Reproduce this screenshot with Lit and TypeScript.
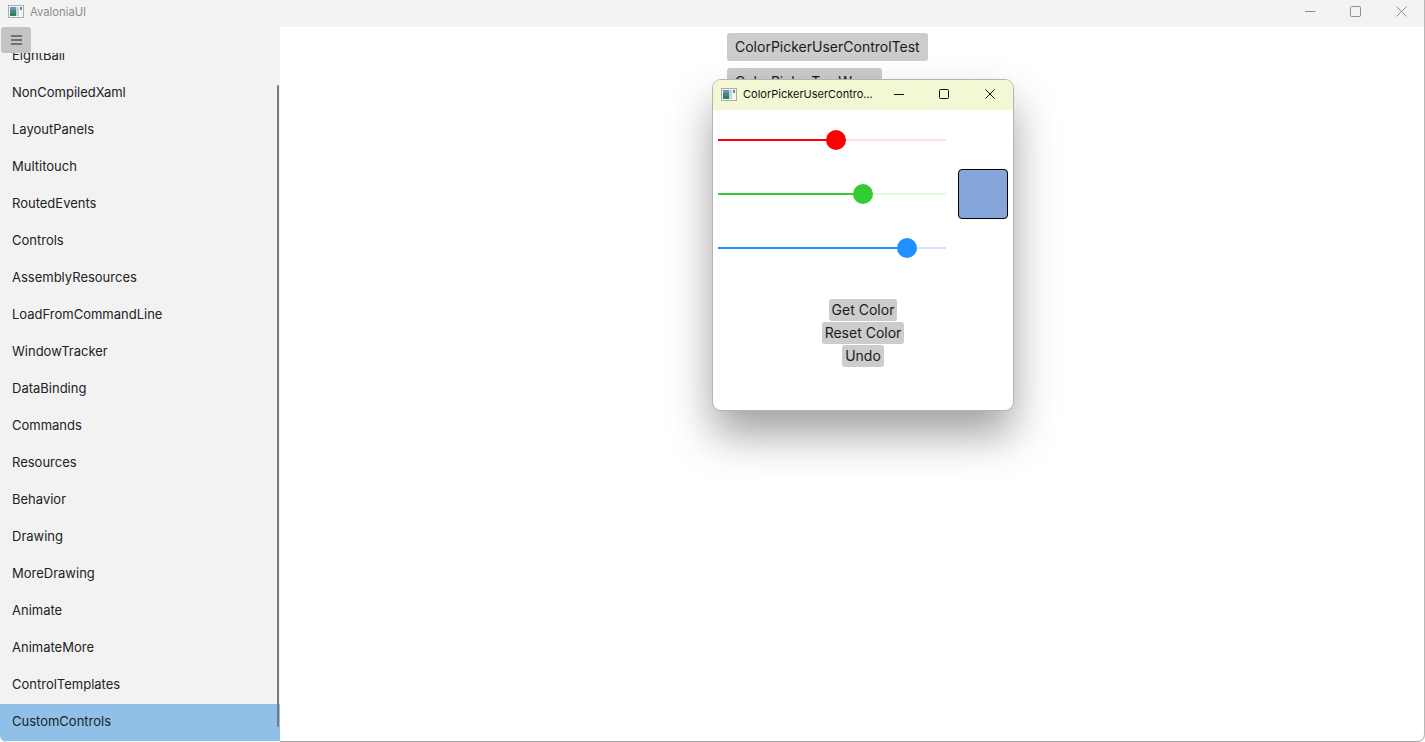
import { LitElement, html, css, svg } from "lit";
import { customElement } from "lit/decorators.js";

const ITEMS = ["EightBall","NonCompiledXaml","LayoutPanels","Multitouch","RoutedEvents","Controls","AssemblyResources","LoadFromCommandLine","WindowTracker","DataBinding","Commands","Resources","Behavior","Drawing","MoreDrawing","Animate","AnimateMore","ControlTemplates","CustomControls"];

const SLIDERS = [
  { color: "#ff0000", rest: "#ffdfdf", pos: 118 },
  { color: "#32cd32", rest: "#dffcdf", pos: 145 },
  { color: "#1e90ff", rest: "#dfdffb", pos: 189 },
];

const appIcon = svg`<svg class="appicon" width="16" height="13" viewBox="0 0 16 13">
  <rect x="0.5" y="0.5" width="15" height="12" fill="#f4f6f6" stroke="#a8adb1"/>
  <rect x="2" y="2" width="6" height="9" fill="#3d8a8a"/>
  <rect x="2" y="2" width="6" height="3" fill="#6f93a8"/>
  <rect x="2" y="8" width="6" height="3" fill="#2f7f62"/>
  <rect x="8" y="2" width="3" height="9" fill="#c6d4da"/>
  <rect x="12" y="2" width="2" height="3" fill="#5f8a98"/>
</svg>`;

@customElement("app-root")
export class AppRoot extends LitElement {
  static styles = css`
    :host { display: block; width: 1425px; height: 742px; font-family: Inter, "Liberation Sans", sans-serif; color: #1a1a1a; }
    * { box-sizing: border-box; }
    .frame { position: relative; width: 1425px; height: 742px; display: flex; flex-direction: column; overflow: hidden; background: #fff;
      border-right: 1px solid #b8b8b8; border-bottom-left-radius: 7px; border-bottom-right-radius: 7px; box-shadow: inset 0 -1px 0 #a8a8a8; }
    .titlebar { height: 27px; flex: none; display: flex; align-items: center; background: #f3f3f3; padding-left: 8px; }
    .titlebar .appicon { margin-top: -4px; }
    .app-title { margin-left: 6px; margin-top: -4px; font-size: 11.25px; color: #8c8c8c; flex: 1; }
    .caption { display: flex; align-self: flex-start; }
    .caption button { width: 45px; height: 22px; padding: 0; border: 0; background: none; display: flex; align-items: center; justify-content: center; }
    .caption button:last-child { margin-left: 1px; }
    .body { flex: 1; display: flex; min-height: 0; }
    .sidebar { position: relative; width: 280px; flex: none; display: flex; flex-direction: column; background: #f2f2f2; }
    .hamburger-row { height: 26px; flex: none; padding-left: 1px; position: relative; z-index: 1; }
    .hamburger { width: 30px; height: 26px; padding: 0; border: 0; border-radius: 3px; background: #c4c4c4; display: flex; align-items: center; justify-content: center; }
    .list { flex: 1; overflow: hidden; min-height: 0; margin-bottom: 1px; }
    .list-inner { margin-top: -15px; display: flex; flex-direction: column; }
    .item { height: 37px; flex: none; display: flex; align-items: center; padding: 0 0 4px 12px; font-size: 13px; color: #222; }
    .item.sel { background: #90c0e8; }
    .scrollbar { position: absolute; right: 1px; top: 58px; height: 642px; width: 2.5px; background: #7b7b7b; border-radius: 2px; z-index: 2; }
    .main { flex: 1; display: flex; flex-direction: column; align-items: flex-start; gap: 7px; padding: 6px 0 0 447px; }
    .btn { border: 0; border-radius: 3px; background: #cccccc; color: #1a1a1a; font: 14px Inter, "Liberation Sans", sans-serif; height: 28px; padding: 0 8px; line-height: 28px; white-space: nowrap; }
    .win { position: absolute; left: 712px; top: 79px; width: 302px; height: 332px; background: #fff; border-radius: 9px; overflow: hidden;
      border: 1px solid #b4b4b4; display: flex; flex-direction: column; }
    .win-shadow { position: absolute; left: 713px; top: 80px; width: 300px; height: 330px; border-radius: 8px; box-shadow: 0 24px 44px rgba(0,0,0,0.38); }
    .win-bar { height: 30px; flex: none; background: #f2f7d4; display: flex; align-items: center; padding: 0 0 2px 8px; }
    .win-title { margin-left: 6px; width: 131px; font-size: 11px; line-height: 14px; color: #111; white-space: nowrap; overflow: hidden; text-overflow: ellipsis; }
    .win-caps { display: flex; margin-left: 2px; }
    .win-caps button { width: 45px; height: 28px; padding: 0; border: 0; background: none; display: flex; align-items: center; justify-content: center; }
    .win-caps button:last-child { margin-left: 1px; }
    .win-body { flex: 1; display: flex; flex-direction: column; align-items: center; }
    .controls { width: 100%; display: flex; align-items: center; padding: 20px 5px 0 5px; justify-content: space-between; }
    .sliders { width: 228px; display: flex; flex-direction: column; gap: 34px; }
    .slider { position: relative; height: 20px; display: flex; align-items: center; }
    .track { height: 2px; }
    .thumb { position: absolute; top: 0; width: 20px; height: 20px; border-radius: 50%; }
    .swatch { width: 50px; height: 50px; background: #85a5db; border: 1px solid #000; border-radius: 4px; }
    .actions { margin-top: 41px; display: flex; flex-direction: column; align-items: center; gap: 1px; }
    .actions .btn { height: 22px; line-height: 22px; padding: 0 3px; }
  `;

  render() {
    return html`<div class="frame">
      <div class="titlebar">
        ${appIcon}
        <span class="app-title">AvaloniaUI</span>
        <div class="caption">
          <button><svg width="11" height="11" viewBox="0 0 11 11"><path d="M0 5.5H10.5" stroke="#8f8f8f" fill="none"/></svg></button>
          <button><svg width="11" height="11" viewBox="0 0 11 11"><rect x="0.5" y="0.5" width="10" height="10" rx="1" stroke="#8f8f8f" fill="none"/></svg></button>
          <button><svg width="11" height="11" viewBox="0 0 11 11"><path d="M0.5 0.5L10.5 10.5M10.5 0.5L0.5 10.5" stroke="#8f8f8f" fill="none"/></svg></button>
        </div>
      </div>
      <div class="body">
        <div class="sidebar">
          <div class="hamburger-row">
            <button class="hamburger"><svg width="11" height="10" viewBox="0 0 11 10"><path d="M0 1H11M0 5H11M0 9H11" stroke="#555" stroke-width="1.6" fill="none"/></svg></button>
          </div>
          <div class="list"><div class="list-inner">
            ${ITEMS.map((t) => html`<div class="item ${t === "CustomControls" ? "sel" : ""}">${t}</div>`)}
          </div></div>
          <div class="scrollbar"></div>
        </div>
        <div class="main">
          <button class="btn">ColorPickerUserControlTest</button>
          <button class="btn">ColorPickerTwoWays</button>
        </div>
      </div>
      <div class="win-shadow"></div>
      <div class="win">
        <div class="win-bar">
          ${appIcon}
          <span class="win-title">ColorPickerUserControlTest</span>
          <div class="win-caps">
            <button><svg width="10" height="10" viewBox="0 0 10 10"><path d="M0 5.5H10" stroke="#111" fill="none"/></svg></button>
            <button><svg width="10" height="10" viewBox="0 0 10 10"><rect x="0.5" y="0.5" width="9" height="9" rx="1" stroke="#111" fill="none"/></svg></button>
            <button><svg width="10" height="10" viewBox="0 0 10 10"><path d="M0.5 0.5L9.5 9.5M9.5 0.5L0.5 9.5" stroke="#111" fill="none"/></svg></button>
          </div>
        </div>
        <div class="win-body">
          <div class="controls">
            <div class="sliders">
              ${SLIDERS.map((s) => html`<div class="slider">
                <div class="track" style="width:${s.pos}px;background:${s.color}"></div>
                <div class="track" style="flex:1;background:${s.rest}"></div>
                <div class="thumb" style="left:${s.pos - 10}px;background:${s.color}"></div>
              </div>`)}
            </div>
            <div class="swatch"></div>
          </div>
          <div class="actions">
            <button class="btn">Get Color</button>
            <button class="btn">Reset Color</button>
            <button class="btn">Undo</button>
          </div>
        </div>
      </div>
    </div>`;
  }
}
